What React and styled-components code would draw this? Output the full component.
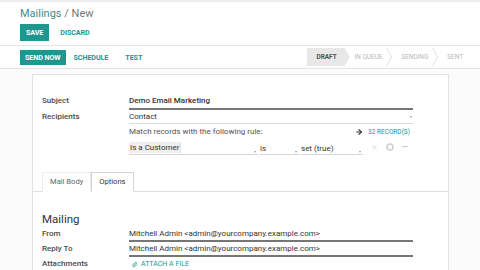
import React from 'react'
import styled, { createGlobalStyle } from 'styled-components'
import { ArrowRight, X } from 'lucide-react'

const TEAL = '#21968f'

const GlobalStyle = createGlobalStyle`
  body {
    margin: 0;
    font-family: Roboto, "Liberation Sans", sans-serif;
    background: #fff;
  }
`

const Page = styled.div`
  width: 480px;
  height: 270px;
  overflow: hidden;
  box-sizing: border-box;
  border-top: 2px solid #ededed;
  background: #fbfbfb;
`

const ControlPanel = styled.div`
  height: 43px;
  box-sizing: border-box;
  padding: 5px 20px 0;
  background: #fff;
`

const Breadcrumb = styled.div`
  font-size: 11px;
  line-height: 14px;
  color: #777;
`

const Crumb = styled.span`
  color: #4a8987;
`

const ButtonRow = styled.div`
  display: flex;
  align-items: center;
  gap: ${p => p.$gap || 8}px;
  margin-top: ${p => p.$mt ?? 3}px;
`

const Button = styled.div`
  display: flex;
  align-items: center;
  height: ${p => p.$h || 17}px;
  padding: 0 ${p => p.$px || 5}px;
  box-sizing: border-box;
  font-size: 7.2px;
  font-weight: 700;
  letter-spacing: -0.1px;
  text-transform: uppercase;
  color: ${p => (p.$primary ? '#fff' : TEAL)};
  background: ${p => (p.$primary ? TEAL : 'transparent')};
`

const Header = styled.div`
  display: flex;
  align-items: center;
  justify-content: space-between;
  height: 24px;
  box-sizing: border-box;
  padding-left: 20px;
  background: #fff;
  border-top: 1px solid #e4e4e4;
  border-bottom: 1px solid #e4e4e4;
`

const StatusBar = styled.div`
  display: flex;
  align-items: center;
  height: 100%;
  margin-right: 8px;
`

const StatusItem = styled.div`
  display: flex;
  align-items: center;
  height: 18px;
  padding: 0 ${p => p.$pr}px 0 ${p => p.$pl}px;
  font-size: 6.4px;
  text-transform: uppercase;
  color: ${p => (p.$active ? '#505050' : '#b8b8b8')};
  font-weight: ${p => (p.$active ? 700 : 400)};
  background: ${p => (p.$active ? '#e8e8e8' : 'transparent')};
  clip-path: ${p =>
    p.$active
      ? 'polygon(0 0, calc(100% - 5px) 0, 100% 50%, calc(100% - 5px) 100%, 0 100%)'
      : 'none'};
`

const Chevron = () => (
  <svg width="6" height="18" viewBox="0 0 6 18">
    <polyline points="0.5,0 5.5,9 0.5,18" fill="none" stroke="#e2e2e2" strokeWidth="1" />
  </svg>
)

const Body = styled.div`
  padding: 5px 31px 0 32px;
`

const Sheet = styled.div`
  width: 417px;
  height: 220px;
  box-sizing: border-box;
  padding: 18px 0 0 9px;
  background: #fff;
  border: 1px solid #e2e2e2;
`

const FieldRow = styled.div`
  display: grid;
  grid-template-columns: 87px 284px;
  align-items: start;
`

const Label = styled.div`
  height: ${p => p.$h}px;
  line-height: ${p => p.$h}px;
  font-size: 8px;
  font-weight: 500;
  color: #4a4a4a;
`

const Value = styled.div`
  display: flex;
  align-items: ${p => p.$align || 'center'};
  justify-content: space-between;
  height: ${p => p.$h}px;
  font-size: 8px;
  font-weight: ${p => (p.$strong ? 500 : 400)};
  color: ${p => p.$color || '#333'};
  border-bottom: ${p => p.$line || 'none'};
`

const Caret = styled.span`
  display: inline-block;
  width: 0;
  height: 0;
  margin-right: ${p => p.$mr || 1}px;
  border-left: 1.5px solid transparent;
  border-right: 1.5px solid transparent;
  border-top: 2px solid #999;
`

const RecordLink = styled.span`
  display: flex;
  align-items: center;
  gap: 5px;
  margin-right: 3px;
  font-size: 6.5px;
  color: ${TEAL};
`

const RuleRow = styled.div`
  display: flex;
  align-items: flex-end;
  gap: 2px;
`

const Select = styled.div`
  display: flex;
  align-items: flex-end;
  justify-content: space-between;
  width: ${p => p.$w}px;
  height: 16px;
  padding-bottom: 1px;
  box-sizing: border-box;
  font-size: 8px;
  color: #333;
  border-bottom: 1px solid #d6d6d6;
`

const Chip = styled.span`
  height: 11px;
  line-height: 11px;
  padding: 0 1px;
  background: #efefef;
  border-right: 1px solid #e2e2e2;
`

const RuleIcons = styled.div`
  display: flex;
  align-items: center;
  gap: 8px;
  height: 16px;
  margin-left: 6px;
  color: #c4c4c4;
`

const Dots = styled.span`
  font-size: 9px;
  font-weight: 700;
  letter-spacing: -1px;
  color: #c0c0c0;
`

const Notebook = styled.div`
  margin: 17px 0 0 -9px;
`

const TabBar = styled.div`
  display: flex;
  height: 20px;
  box-sizing: border-box;
  padding-left: 9px;
  border-bottom: 1px solid #dedede;
`

const Tab = styled.div`
  height: 20px;
  box-sizing: border-box;
  padding: 0 ${p => p.$px}px;
  line-height: 18px;
  font-size: 7.6px;
  color: ${p => (p.$active ? '#333' : '#666')};
  background: #fff;
  border: 1px solid ${p => (p.$active ? '#d4d4d4' : '#ececec')};
  border-bottom-color: ${p => (p.$active ? '#fff' : 'transparent')};
`

const TabContent = styled.div`
  padding-left: 9px;
`

const Heading = styled.div`
  margin-top: 19px;
  height: 16px;
  line-height: 16px;
  font-size: 11.5px;
  color: #333;
`

const AttachLink = styled.span`
  display: flex;
  align-items: center;
  gap: 3px;
  padding-left: 3px;
  font-size: 7px;
  line-height: 8px;
  color: ${TEAL};
`

const Ring = () => (
  <svg width="8" height="8" viewBox="0 0 8 8">
    <circle cx="4" cy="4" r="3" fill="none" stroke="#cfcfcf" strokeWidth="1.6" />
  </svg>
)

const Clip = () => (
  <svg width="6" height="7" viewBox="0 0 24 24" fill="none" stroke={TEAL} strokeWidth="2.5">
    <path d="m21.44 11.05-9.19 9.19a6 6 0 0 1-8.49-8.49l8.57-8.57A4 4 0 1 1 18 8.84l-8.59 8.57a2 2 0 0 1-2.83-2.83l8.49-8.48" />
  </svg>
)

export default function App() {
  const strongLine = '2px solid #767676'
  return (
    <Page>
      <GlobalStyle />
      <ControlPanel>
        <Breadcrumb>
          <Crumb>Mailings</Crumb> / New
        </Breadcrumb>
        <ButtonRow>
          <Button $primary $px={6}>Save</Button>
          <Button $px={3}>Discard</Button>
        </ButtonRow>
      </ControlPanel>
      <Header>
        <ButtonRow $gap={4} $mt={0}>
          <Button $primary $h={15}>Send Now</Button>
          <Button $px={4}>Schedule</Button>
          <Button $px={9}>Test</Button>
        </ButtonRow>
        <StatusBar>
          <StatusItem $active $pl={10} $pr={13}>Draft</StatusItem>
          <StatusItem $pl={5} $pr={4}>In Queue</StatusItem>
          <Chevron />
          <StatusItem $pl={9} $pr={4}>Sending</StatusItem>
          <Chevron />
          <StatusItem $pl={9} $pr={9}>Sent</StatusItem>
        </StatusBar>
      </Header>
      <Body>
        <Sheet>
          <FieldRow>
            <Label $h={15}>Subject</Label>
            <Value $h={15} $strong $line={strongLine}>Demo Email Marketing</Value>
          </FieldRow>
          <FieldRow>
            <Label $h={13}>Recipients</Label>
            <div>
              <Value $h={13} $line="1px solid #dcdcdc">
                Contact
                <Caret />
              </Value>
              <Value $h={15} $color="#555">
                Match records with the following rule:
                <RecordLink>
                  <ArrowRight size={8} strokeWidth={3.5} color="#333" />
                  32 RECORD(S)
                </RecordLink>
              </Value>
              <RuleRow>
                <Select $w={129}>
                  <Chip>Is a Customer</Chip>
                  <Caret $mr={2} />
                </Select>
                <Select $w={39}>
                  <span>is</span>
                  <Caret $mr={2} />
                </Select>
                <Select $w={62}>
                  <span>set (true)</span>
                  <Caret $mr={2} />
                </Select>
                <RuleIcons>
                  <X size={7} strokeWidth={2} />
                  <Ring />
                  <Dots>···</Dots>
                </RuleIcons>
              </RuleRow>
            </div>
          </FieldRow>
          <Notebook>
            <TabBar>
              <Tab $px={7}>Mail Body</Tab>
              <Tab $active $px={7}>Options</Tab>
            </TabBar>
            <TabContent>
              <Heading>Mailing</Heading>
              <FieldRow>
                <Label $h={13}>From</Label>
                <Value $h={13} $line={strongLine}>Mitchell Admin &lt;admin@yourcompany.example.com&gt;</Value>
              </FieldRow>
              <FieldRow>
                <Label $h={13}>Reply To</Label>
                <Value $h={13} $line={strongLine}>Mitchell Admin &lt;admin@yourcompany.example.com&gt;</Value>
              </FieldRow>
              <FieldRow>
                <Label $h={14}>Attachments</Label>
                <Value $h={11} $align="flex-end">
                  <AttachLink>
                    <Clip />
                    ATTACH A FILE
                  </AttachLink>
                </Value>
              </FieldRow>
            </TabContent>
          </Notebook>
        </Sheet>
      </Body>
    </Page>
  )
}
